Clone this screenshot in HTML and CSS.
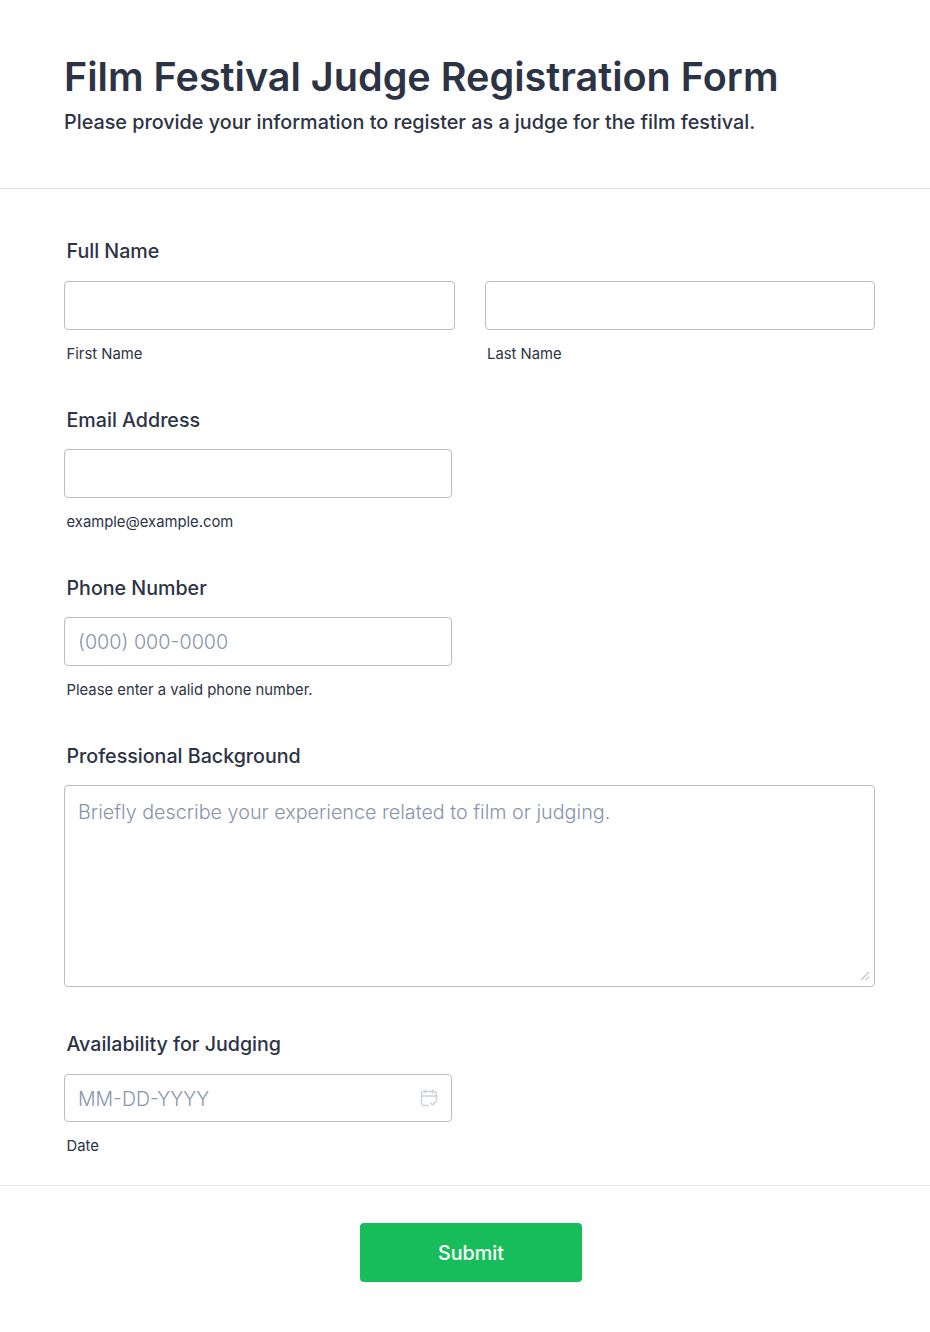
FILE: index.html
```html
<!DOCTYPE html>
<html lang="en">

<head>
    <meta charset="UTF-8">
    <meta name="viewport" content="width=device-width, initial-scale=1.0">
    <title>Film Festival Judge Registration Form</title>
    <link rel="stylesheet" href="styles.css">
</head>

<body>
    <form class="form-page">
        <header class="form-header">
            <h1>Film Festival Judge Registration Form</h1>
            <p>Please provide your information to register as a judge for the film festival.</p>
        </header>

        <div class="form-body">
            <div class="field">
                <div class="field-label field-label-tall">Full Name</div>
                <div class="name-row">
                    <div class="name-col">
                        <input type="text" id="firstName" class="text-input">
                        <label class="sub-label" for="firstName">First Name</label>
                    </div>
                    <div class="name-col">
                        <input type="text" id="lastName" class="text-input">
                        <label class="sub-label" for="lastName">Last Name</label>
                    </div>
                </div>
            </div>

            <div class="field">
                <label class="field-label" for="email">Email Address</label>
                <div class="half">
                    <input type="email" id="email" class="text-input">
                </div>
                <div class="sub-label">example@example.com</div>
            </div>

            <div class="field">
                <label class="field-label" for="phone">Phone Number</label>
                <div class="half">
                    <input type="tel" id="phone" class="text-input" placeholder="(000) 000-0000">
                </div>
                <div class="sub-label">Please enter a valid phone number.</div>
            </div>

            <div class="field field-wide">
                <label class="field-label" for="background">Professional Background</label>
                <div class="area-wrap">
                    <textarea id="background" class="text-input text-area"
                        placeholder="Briefly describe your experience related to film or judging."></textarea>
                    <svg class="area-grip" width="10" height="10" viewBox="0 0 10 10" fill="none" stroke="#c3c7d3"
                        stroke-width="1.2">
                        <path d="M1 9l8-8M5.500 9L9 5.500" />
                    </svg>
                </div>
            </div>

            <div class="field">
                <label class="field-label" for="date">Availability for Judging</label>
                <div class="half date-wrap">
                    <input type="text" id="date" class="text-input date-input" placeholder="MM-DD-YYYY">
                    <svg class="date-icon" width="18" height="18" viewBox="0 0 18 18" fill="none" stroke="#cdd0dc"
                        stroke-width="1.4" stroke-linecap="round" stroke-linejoin="round">
                        <path d="M8 16.500H3.500a2 2 0 0 1-2-2V4.500a2 2 0 0 1 2-2h11a2 2 0 0 1 2 2v6" />
                        <path d="M1.500 7h15M5.500 1v3M12.500 1v3" />
                        <path d="M10.500 14l2 2 4-4" />
                    </svg>
                </div>
                <div class="sub-label">Date</div>
            </div>
        </div>

        <div class="form-footer">
            <button type="submit" class="submit-btn">Submit</button>
        </div>
    </form>
</body>

</html>
```

FILE: styles.css
```css
html,
body {
    margin: 0;
    background-color: #fff;
    font-family: Inter, sans-serif;
    color: #2c3345;
}

.form-page {
    width: 930px;
    height: 1332px;
}

.form-header {
    height: 189px;
    box-sizing: border-box;
    padding: 52px 64px 0;
    border-bottom: 1px solid #dcdee8;
}

.form-header h1 {
    margin: 0;
    font-size: 39.55px;
    line-height: 50px;
    font-weight: 600;
}

.form-header p {
    margin: 5px 0 0;
    font-size: 19.77px;
    line-height: 30px;
    font-weight: 500;
}

.form-body {
    padding: 47px 55px 0 64px;
    height: 997px;
    box-sizing: border-box;
    border-bottom: 1px solid #e6e8f0;
}

.field {
    margin-bottom: 40.5px;
}

.field-wide {
    margin-bottom: 42px;
}

.field-label {
    display: block;
    padding-left: 2.5px;
    margin-bottom: 14.5px;
    font-size: 19.65px;
    line-height: 30px;
    font-weight: 500;
}

.field-label-tall {
    margin-bottom: 15px;
}

.name-row {
    display: flex;
    gap: 30px;
}

.name-col {
    flex: 1;
}

.half {
    width: 388px;
}

.text-input {
    display: block;
    width: 100%;
    height: 49px;
    box-sizing: border-box;
    padding: 0 13px;
    border: 1px solid #b8bdc9;
    border-radius: 4px;
    background-color: #fff;
    font-family: Inter, sans-serif;
    font-size: 19.75px;
    font-weight: 300;
    color: #2c3345;
}

.text-input::placeholder {
    color: #8894ab;
    opacity: 1;
}

.area-wrap {
    position: relative;
}

.text-area {
    height: 202px;
    padding: 11px 13px;
    line-height: 30px;
    resize: none;
}

.area-grip {
    position: absolute;
    right: 5px;
    bottom: 6px;
}

.date-input {
    height: 48.5px;
    padding-top: 2px;
    font-size: 19.5px;
}

.sub-label {
    display: block;
    padding-left: 2.5px;
    margin-top: 14px;
    font-size: 14.82px;
    line-height: 20px;
}

.date-wrap {
    position: relative;
}

.date-icon {
    position: absolute;
    top: 15px;
    right: 14px;
}

.form-footer {
    display: flex;
    justify-content: center;
    padding: 37px 54px 0 66px;
}

.submit-btn {
    width: 222px;
    height: 59px;
    padding: 0;
    border: none;
    border-radius: 4px;
    background-color: #18bd5b;
    color: #fff;
    font-family: Inter, sans-serif;
    font-size: 19.7px;
    font-weight: 500;
    cursor: pointer;
}
```
